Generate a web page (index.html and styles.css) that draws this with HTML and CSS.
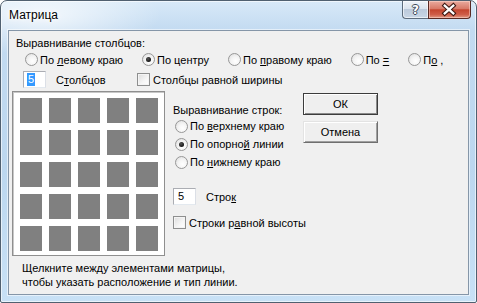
FILE: index.html
```html
<!DOCTYPE html>
<html lang="ru">
<head>
<meta charset="utf-8">
<title>Матрица</title>
<link rel="stylesheet" href="styles.css">
</head>
<body>
<div class="window">
  <div class="titlebar">
    <span class="title">Матрица</span>
    <div class="caption-btns">
      <div class="cbtn help"><span class="qmark">?</span></div>
      <div class="cbtn close">
        <svg width="43" height="17" viewBox="0 0 43 17">
          <path d="M16.5 4.5 L25.5 12.5 M25.5 4.5 L16.5 12.5" stroke="#3a1610" stroke-width="4.6" stroke-linecap="square" fill="none"/>
          <path d="M16.5 4.5 L25.5 12.5 M25.5 4.5 L16.5 12.5" stroke="#ffffff" stroke-width="2.4" stroke-linecap="square" fill="none"/>
        </svg>
      </div>
    </div>
  </div>
  <div class="client">
    <div class="head">Выравнивание столбцов:</div>
    <div class="radio-row">
      <div class="opt"><span class="radio"></span><span>По <u>л</u>евому краю</span></div>
      <div class="opt"><span class="radio on"></span><span>По центру</span></div>
      <div class="opt"><span class="radio"></span><span>По <u>п</u>равому краю</span></div>
      <div class="opt"><span class="radio"></span><span>По <u>=</u></span></div>
      <div class="opt"><span class="radio"></span><span>П<u>о</u> ,</span></div>
    </div>
    <div class="cols-row">
      <span class="num"><span class="sel">5</span></span>
      <span class="num-label">С<u>т</u>олбцов</span>
      <span class="check"></span>
      <span>Столбцы равной ширины</span>
    </div>
    <div class="main">
      <div class="matrix">
        <span class="cell"></span><span class="cell"></span><span class="cell"></span><span class="cell"></span><span class="cell"></span>
        <span class="cell"></span><span class="cell"></span><span class="cell"></span><span class="cell"></span><span class="cell"></span>
        <span class="cell"></span><span class="cell"></span><span class="cell"></span><span class="cell"></span><span class="cell"></span>
        <span class="cell"></span><span class="cell"></span><span class="cell"></span><span class="cell"></span><span class="cell"></span>
        <span class="cell"></span><span class="cell"></span><span class="cell"></span><span class="cell"></span><span class="cell"></span>
      </div>
      <div class="rows-col">
        <div class="head2">Выравнивание строк:</div>
        <div class="vopt"><span class="radio"></span><span>По <u>в</u>ерхнему краю</span></div>
        <div class="vopt"><span class="radio on"></span><span>По опорно<u>й</u> линии</span></div>
        <div class="vopt"><span class="radio"></span><span>По <u>н</u>ижнему краю</span></div>
        <div class="rows-num">
          <span class="num"><span class="val">5</span></span>
          <span class="num-label2">Стро<u>к</u></span>
        </div>
        <div class="rows-check"><span class="check"></span><span>Строки р<u>а</u>вной высоты</span></div>
      </div>
      <div class="buttons">
        <div class="btn default">ОК</div>
        <div class="btn">Отмена</div>
      </div>
    </div>
    <div class="hint">Щелкните между элементами матрицы,<br>чтобы указать расположение и тип линии.</div>
  </div>
</div>
</body>
</html>
```

FILE: styles.css
```css
* { box-sizing: border-box; }
html, body { margin: 0; padding: 0; }
body {
  width: 477px;
  height: 303px;
  overflow: hidden;
  font-family: "Liberation Sans", Arial, sans-serif;
  font-size: 11px;
  color: #000;
  background: #ffffff;
}
u { text-decoration: underline; text-underline-offset: 1px; }

.window {
  width: 477px;
  height: 303px;
  border: 1px solid #506070;
  border-radius: 7px 7px 2px 2px;
  background:
    radial-gradient(ellipse 120px 40px at 40px 14px, rgba(255,255,255,0.75), rgba(255,255,255,0) 100%),
    linear-gradient(180deg, #d8e9f8 0, #c3dbf1 29px, #bcd7ef 55%, #c8e1f6 100%);
  box-shadow: inset 0 0 0 1px rgba(255,255,255,0.6);
  padding: 0 7px 7px 7px;
  display: flex;
  flex-direction: column;
}

.titlebar {
  height: 29px;
  flex: none;
  display: flex;
  align-items: flex-start;
}
.title {
  font-size: 12px;
  line-height: 15px;
  padding: 7px 0 0 1px;
  text-shadow: 0 0 5px #fff, 0 0 3px #fff, 0 0 8px #fff;
}
.caption-btns {
  margin-left: auto;
  margin-right: -2px;
  display: flex;
}
.cbtn {
  height: 18px;
  border: 1px solid #5d6c7c;
  border-top: none;
  display: flex;
  align-items: center;
  justify-content: center;
}
.help {
  width: 26px;
  border-right: none;
  border-radius: 0 0 0 4px;
  background: linear-gradient(180deg, #eef3f8 0, #dbe4ee 45%, #bccadb 50%, #c9d7e6 100%);
  box-shadow: inset 0 0 0 1px rgba(255,255,255,0.6);
}
.qmark {
  font-family: "DejaVu Sans", sans-serif;
  font-weight: bold;
  font-size: 12px;
  line-height: 12px;
  color: #fff;
  text-shadow: 1px 0 0 #3c4a58, -1px 0 0 #3c4a58, 0 1px 0 #3c4a58, 0 -1px 0 #3c4a58;
}
.close {
  width: 43px;
  border-color: #5a2a24;
  border-radius: 0 0 4px 0;
  background: linear-gradient(180deg, #eaab9f 0, #d87a68 45%, #c4452f 52%, #cf5e49 80%, #e09a85 100%);
  box-shadow: inset 0 0 0 1px rgba(255,220,210,0.5);
}
.close svg { display: block; }

.client {
  flex: 1;
  border: 1px solid #8596a8;
  box-shadow: 0 0 0 1px rgba(255,255,255,0.55);
  background: #f0f0f0;
  display: flex;
  flex-direction: column;
}

.head {
  margin: 5px 0 0 7px;
  line-height: 14px;
}

.radio-row {
  margin: 2px 0 0 16px;
  height: 15px;
  display: flex;
  align-items: center;
  gap: 19px;
}
.opt, .vopt {
  display: flex;
  align-items: center;
  white-space: nowrap;
}
.radio {
  width: 13px;
  height: 13px;
  flex: none;
  border-radius: 50%;
  border: 1px solid #979797;
  background: radial-gradient(circle at 60% 65%, #ffffff 0, #f4f4f4 45%, #dadada 100%);
  margin-right: 2px;
  position: relative;
}
.radio.on::after {
  content: "";
  position: absolute;
  left: 3px;
  top: 3px;
  width: 5px;
  height: 5px;
  border-radius: 50%;
  background: radial-gradient(circle at 40% 35%, #555, #0a0a0a 80%);
}
.check {
  width: 13px;
  height: 13px;
  flex: none;
  border: 1px solid #8e8f8f;
  background: linear-gradient(135deg, #dcdcdc 0, #f6f6f6 60%, #ffffff 100%);
  box-shadow: inset 0 0 0 1px #f4f4f4;
  margin-right: 3px;
}

.cols-row {
  margin: 4px 0 0 14px;
  height: 17px;
  display: flex;
  align-items: center;
  white-space: nowrap;
}
.num {
  width: 23px;
  height: 17px;
  flex: none;
  border: 1px solid #abadb3;
  border-right-color: #dbdfe6;
  border-bottom-color: #e3e9ef;
  background: #fff;
  padding-left: 4px;
  display: flex;
  align-items: center;
  line-height: 13px;
}
.num .sel {
  background: #3399ff;
  color: #fff;
  margin-left: -1px;
  padding: 0 1px;
}
.num-label {
  margin-left: 10px;
  width: 81px;
}

.main {
  margin: 3px 0 0 3px;
  display: flex;
  align-items: flex-start;
}
.matrix {
  width: 153px;
  height: 165px;
  border: 1px solid #8f8f8f;
  box-shadow: inset 1px 1px 0 #c8c8c8;
  background: #fff;
  padding: 6px 0 0 7px;
  display: grid;
  grid-template-columns: repeat(5, 22px);
  grid-auto-rows: 25px;
  gap: 7px;
  flex: none;
}
.cell { background: #808080; }

.rows-col {
  width: 130px;
  margin-left: 8px;
  padding-top: 12px;
  flex: none;
  white-space: nowrap;
}
.head2 { line-height: 14px; }
.vopt { height: 18px; margin-left: 2px; }
.rows-num {
  margin-top: 17px;
  display: flex;
  align-items: center;
  height: 17px;
}
.num .val { display: block; }
.num-label2 { margin-left: 10px; }
.rows-check {
  margin-top: 10px;
  height: 15px;
  display: flex;
  align-items: center;
}

.buttons {
  margin-top: 2px;
  display: flex;
  flex-direction: column;
  gap: 6px;
}
.btn {
  width: 75px;
  height: 22px;
  border: 1px solid;
  border-color: #e3e3e3 #6f6f6f #6f6f6f #e3e3e3;
  background: #efefef;
  box-shadow: inset 1px 1px 0 #ffffff, inset -1px -1px 0 #a0a0a0;
  display: flex;
  align-items: center;
  justify-content: center;
}
.btn.default {
  border-color: #3c3c3c;
  box-shadow: inset 1px 1px 0 #ffffff, inset -1px -1px 0 #8a8a8a;
}

.hint {
  margin: 5px 0 0 13px;
  line-height: 14px;
}
```
